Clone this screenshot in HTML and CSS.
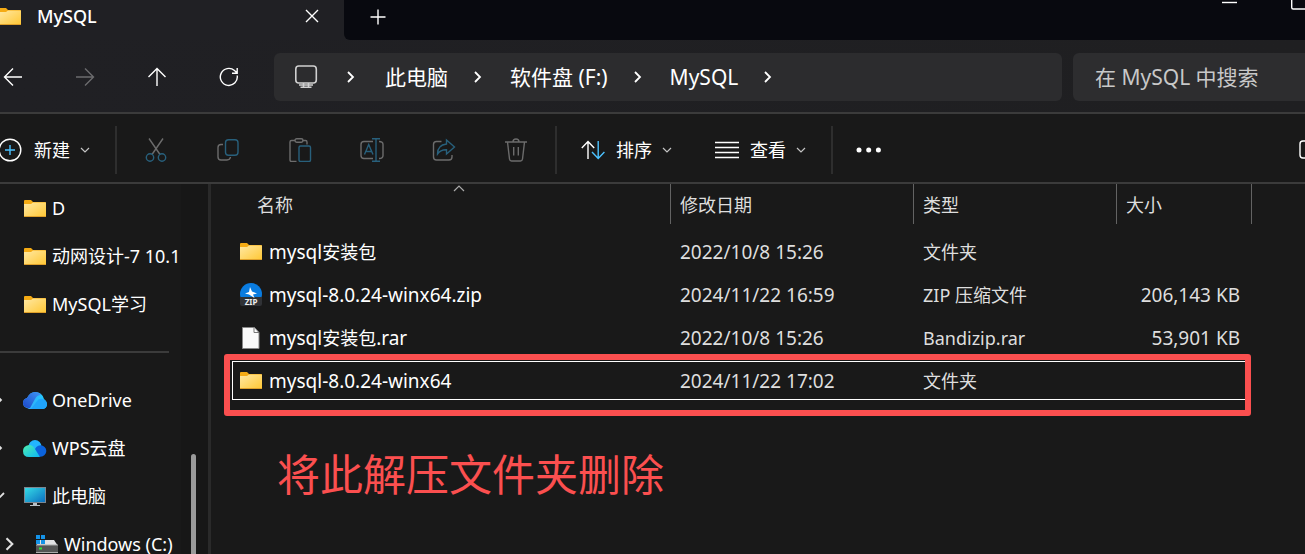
FILE: index.html
```html
<!DOCTYPE html>
<html lang="zh-CN">
<head>
<meta charset="utf-8">
<title>MySQL</title>
<link rel="stylesheet" href="styles.css">
</head>
<body>
<svg class="defs" aria-hidden="true">
  <defs>
    <linearGradient id="gFolder" x1="0" y1="0" x2="1" y2="1"><stop offset="0" stop-color="#ffe8a3"/><stop offset="1" stop-color="#ffc733"/></linearGradient>
    <linearGradient id="gPc" x1="0" y1="0" x2="1" y2="1"><stop offset="0" stop-color="#35dbe6"/><stop offset="1" stop-color="#0b6fc0"/></linearGradient>
    <linearGradient id="gOne" x1="0" y1="0" x2="1" y2="0"><stop offset="0" stop-color="#3aa0f8"/><stop offset="1" stop-color="#1fd0ff"/></linearGradient>
    <linearGradient id="gOneL" x1="0" y1="1" x2="1" y2="0"><stop offset="0" stop-color="#1c47c8"/><stop offset="1" stop-color="#3f96f5"/></linearGradient>
    <linearGradient id="gWps" x1="0" y1="0" x2="1" y2="1"><stop offset="0" stop-color="#4df0b0"/><stop offset="1" stop-color="#0bb4f5"/></linearGradient>
    <symbol id="folder" viewBox="0 0 22 17"><path d="M0 1q0-1 1-1h6l2 2h12q1 0 1 1v5H0z" fill="#f5ab14"/><path d="M0 4h7l2-1.500h13V17H0z" fill="url(#gFolder)"/><path d="M0 16.500h22" stroke="#dfa02a"/></symbol>
    <symbol id="chev" viewBox="0 0 10 6"><path d="M1 1l4 4 4-4" fill="none" stroke="currentColor" stroke-width="1.200"/></symbol>
    <symbol id="next" viewBox="0 0 8 12"><path d="M1 1l5 5-5 5" fill="none" stroke="currentColor" stroke-width="1.800"/></symbol>
  </defs>
</svg>
<div class="app">
  <header class="titlebar">
    <div class="tab">
      <svg class="tab-icon" width="22" height="17"><use href="#folder"/></svg>
      <span class="tab-title">MySQL</span>
      <button class="icon-btn tab-close" aria-label="关闭"><svg width="14" height="14" viewBox="0 0 14 14"><path d="M1 1l12 12M13 1L1 13"/></svg></button>
    </div>
    <div class="tab-rest">
      <button class="icon-btn tab-add" aria-label="新建标签页"><svg width="16" height="16" viewBox="0 0 16 16"><path d="M8 .5v15M.5 8h15"/></svg></button>
      <div class="window-buttons">
        <button class="icon-btn" aria-label="最小化"><svg width="15" height="22" viewBox="0 0 15 22"><path d="M0 2.500h15"/></svg></button>
        <button class="icon-btn" aria-label="最大化"><svg width="14" height="22" viewBox="0 0 14 22"><path d="M.7-4.500v12q0 1.500 1.500 1.500h12"/></svg></button>
      </div>
    </div>
  </header>

  <div class="navbar">
    <div class="nav-buttons">
      <button class="icon-btn" aria-label="后退"><svg width="20" height="20" viewBox="0 0 20 20"><path d="M19 10H1.500M10 1.500L1.500 10l8.500 8.500"/></svg></button>
      <button class="icon-btn dim" aria-label="前进"><svg width="20" height="20" viewBox="0 0 20 20"><path d="M1 10h17.500M10 1.500l8.500 8.500-8.500 8.500"/></svg></button>
      <button class="icon-btn" aria-label="上移"><svg width="20" height="20" viewBox="0 0 20 20"><path d="M10 19V1.500M1.500 10L10 1.500l8.500 8.500"/></svg></button>
      <button class="icon-btn" aria-label="刷新"><svg width="20" height="20" viewBox="0 0 20 20"><path d="M18.200 8.500A8.500 8.500 0 1 1 15.500 3.600L18 6M18.200 1v5.300H13"/></svg></button>
    </div>
    <nav class="address" aria-label="地址">
      <svg class="pc-line" width="24" height="24" viewBox="0 0 24 24"><rect x="1.800" y="1" width="20.500" height="17" rx="3"/><path d="M9.500 18v3.500M14.500 18v3.500M5 20h14M6.500 22.300h11"/></svg>
      <svg class="sep first" width="8" height="12"><use href="#next"/></svg>
      <a href="#pc">此电脑</a>
      <svg class="sep" width="8" height="12"><use href="#next"/></svg>
      <a href="#f">软件盘 (F:)</a>
      <svg class="sep" width="8" height="12"><use href="#next"/></svg>
      <a href="#mysql">MySQL</a>
      <svg class="sep" width="8" height="12"><use href="#next"/></svg>
    </nav>
    <input class="search" type="search" aria-label="搜索" placeholder="在 MySQL 中搜索">
  </div>

  <div class="commands">
    <button class="cmd cmd-new"><svg width="24" height="24" viewBox="0 0 24 24"><circle cx="12" cy="12" r="10.800"/><path class="accent" d="M12 7v10M7 12h10"/></svg><span>新建</span><svg class="chev" width="10" height="6"><use href="#chev"/></svg></button>
    <span class="divider"></span>
    <div class="tools">
      <button class="icon-btn" aria-label="剪切"><svg width="24" height="24" viewBox="0 0 24 24"><path d="M5 .5l11 16M19 .5L8 16.500"/><g class="blue"><circle cx="6" cy="19.500" r="3.700"/><circle cx="18" cy="19.500" r="3.700"/></g></svg></button>
      <button class="icon-btn" aria-label="复制"><svg width="24" height="24" viewBox="0 0 24 24"><path d="M7 6.500H5q-3 0-3 3V19q0 3 3 3h6q3 0 3.500-3"/><rect class="blue" x="9.500" y="1.800" width="12.500" height="15.500" rx="3"/></svg></button>
      <button class="icon-btn" aria-label="粘贴"><svg width="24" height="24" viewBox="0 0 24 24"><path d="M7 2.500H3.500q-1.500 0-1.500 1.500v18q0 1.500 1.500 1.500H8.500M14.500 2.500h3q1.500 0 1.500 1.500v2.500"/><rect x="7" y=".8" width="8" height="3.500" rx="1.700"/><rect class="blue" x="11" y="8" width="11.500" height="15.500" rx="1.500"/></svg></button>
      <button class="icon-btn" aria-label="重命名"><svg width="26" height="24" viewBox="0 0 26 24"><path d="M14 3.500H5q-3 0-3 3v11q0 3 3 3h9M20 3.500q4 0 4 3v11q0 3-4 3"/><path class="blue" d="M5.500 16.500L9.700 6.500l4.300 10M7 13.500h5.500M17 1v22M13 .8h8M13 23.200h8"/></svg></button>
      <button class="icon-btn" aria-label="共享"><svg width="24" height="24" viewBox="0 0 24 24"><path d="M9.500 3.500H4.500q-3 0-3 3v12.500q0 3 3 3h12.500q3 0 3-3V17"/><path class="blue" d="M14.500 2L22.500 9l-8 7v-4.300q-6-.2-9 4.300 0-9 9-10z"/></svg></button>
      <button class="icon-btn" aria-label="删除"><svg width="24" height="24" viewBox="0 0 24 24"><path d="M1 4h22M3.500 4l2 17q.3 2 2 2h9q1.700 0 2-2l2-17M9 4q0-3 3-3t3 3M9.700 9v8.500M14.300 9v8.500"/></svg></button>
    </div>
    <span class="divider"></span>
    <button class="cmd cmd-sort"><svg width="24" height="20" viewBox="0 0 24 20"><path d="M7 19V1.500M.8 8L7 1.500 13.200 8"/><path class="accent" d="M17.200 1v17.500M11 12l6.200 6.500 6.200-6.500"/></svg><span>排序</span><svg class="chev" width="10" height="6"><use href="#chev"/></svg></button>
    <button class="cmd cmd-view"><svg width="24" height="18" viewBox="0 0 24 18"><path d="M0 1.500h24M0 6.500h24M0 11.500h24M0 16.500h24"/></svg><span>查看</span><svg class="chev" width="10" height="6"><use href="#chev"/></svg></button>
    <span class="divider"></span>
    <button class="icon-btn more" aria-label="更多"><svg width="26" height="6" viewBox="0 0 26 6"><g class="dots"><circle cx="3" cy="3" r="2.500"/><circle cx="12.700" cy="3" r="2.500"/><circle cx="22.400" cy="3" r="2.500"/></g></svg></button>
    <button class="icon-btn details" aria-label="详细信息"><svg width="26" height="20" viewBox="0 0 26 20"><rect x="1" y="1" width="24" height="17" rx="3"/></svg></button>
  </div>

  <div class="content">
    <aside class="sidebar">
      <nav class="tree" aria-label="导航窗格">
        <a class="node" href="#d"><svg width="22" height="17"><use href="#folder"/></svg><span>D</span></a>
        <a class="node" href="#dw"><svg width="22" height="17"><use href="#folder"/></svg><span>动网设计-7 10.1</span></a>
        <a class="node" href="#study"><svg width="22" height="17"><use href="#folder"/></svg><span>MySQL学习</span></a>
        <hr>
        <a class="node branch" href="#onedrive"><svg class="twist" width="8" height="12"><use href="#next"/></svg><svg width="24" height="17" viewBox="0 0 24 17"><path d="M4 16q-4-1-4-5 0-4 4-5Q7 0 12 0q7 0 9 7 3 2 3 5 0 4-4 5H6z" fill="url(#gOne)"/><path d="M4 6Q7 0 12 0q4 0 6 3-4 0-6 4l-5 9H5q-5-1-5-5 0-4 4-5z" fill="url(#gOneL)"/><path d="M8 17l6-8q2-3 6-2 4 2 4 5 0 5-5 5z" fill="#20a4fb"/></svg><span>OneDrive</span></a>
        <a class="node branch" href="#wps"><svg class="twist" width="8" height="12"><use href="#next"/></svg><svg width="24" height="17" viewBox="0 0 24 17"><circle cx="12" cy="6.500" r="6.500" fill="#23b5ff"/><circle cx="17.500" cy="11" r="5.800" fill="#0b63dd"/><path d="M6 5q4 0 6 4l5 8H6q-6 0-6-6 0-5 6-6z" fill="url(#gWps)"/></svg><span>WPS云盘</span></a>
        <a class="node branch" href="#pc"><svg class="twist" width="12" height="8" viewBox="0 0 12 8"><path d="M1 1l5 5 5-5" fill="none" stroke="currentColor" stroke-width="1.800"/></svg><svg width="24" height="19" viewBox="-1 0 24 19"><path d="M0 0h22v16H0z" fill="#7c8791"/><path d="M1 1h20v14H1z" fill="url(#gPc)"/><path d="M9 16h4v2h3v1H6v-1h3z" fill="#b8c0c6"/></svg><span>此电脑</span></a>
        <a class="node branch child" href="#c"><svg class="twist" width="9" height="14"><use href="#next"/></svg><svg width="22" height="18" viewBox="0 0 22 18"><path d="M4 5h14l4 6H0z" fill="#e2e2e4"/><path d="M0 10h22v7H0z" fill="#555"/><path d="M0 10h22M0 17.500h22" stroke="#aaa"/><path d="M3 12.500h3v2H3z" fill="#2fe63a"/><path d="M0 0h4v4H0zM5 0h4v4H5zM0 5h4v4H0zM5 5h4v4H5z" fill="#1493e8"/></svg><span>Windows (C:)</span></a>
      </nav>
      <div class="scroll-track"><div class="scroll-thumb"></div></div>
    </aside>

    <main class="files">
      <table>
        <colgroup><col class="c-name"><col class="c-date"><col class="c-type"><col class="c-size"></colgroup>
        <thead>
          <tr>
            <th><button>名称</button><svg class="sort-mark" width="12" height="7" viewBox="0 0 12 7"><path d="M1 6l5-5 5 5"/></svg></th>
            <th><button>修改日期</button></th><th><button>类型</button></th><th><button>大小</button></th>
          </tr>
        </thead>
        <tbody>
          <tr><td><div class="file"><svg width="22" height="17"><use href="#folder"/></svg><span>mysql<span class="han">安装包</span></span></div></td><td>2022/10/8 15:26</td><td>文件夹</td><td></td></tr>
          <tr><td><div class="file"><svg width="22" height="23" viewBox="0 0 22 23"><circle cx="11" cy="11" r="11" fill="#0a7ce0"/><path d="M0 14h22v7q0 2-2 2H2q-2 0-2-2z" fill="#303236"/><path d="M10 4l2 4.500 5 2-4 1 1.500 3.500-5.500-3.500-4-1 4-1.500z" fill="#fff"/><text x="11" y="21.500" class="zip">ZIP</text></svg><span>mysql-8.0.24-winx64.zip</span></div></td><td>2024/11/22 16:59</td><td>ZIP 压缩文件</td><td>206,143 KB</td></tr>
          <tr><td><div class="file"><svg width="22" height="22" viewBox="0 0 22 22"><path d="M2.500.5h12l4.500 5v16H2.500z" fill="#fafafa" stroke="#888"/><path d="M14 .5v5h5" fill="none" stroke="#777"/></svg><span>mysql<span class="han">安装包</span>.rar</span></div></td><td>2022/10/8 15:26</td><td>Bandizip.rar</td><td>53,901 KB</td></tr>
          <tr class="focused"><td><div class="file"><svg width="22" height="17"><use href="#folder"/></svg><span>mysql-8.0.24-winx64</span></div><div class="highlight"></div></td><td>2024/11/22 17:02</td><td>文件夹</td><td></td></tr>
        </tbody>
      </table>
      <p class="note">将此解压文件夹删除</p>
    </main>
  </div>
</div>
</body>
</html>
```
FILE: styles.css
```css
* { box-sizing: border-box; }
body {
  margin: 0;
  background: #191919;
  color: #fff;
  font: 19px/24px "Noto Sans", "Noto Sans CJK SC", sans-serif;
  overflow: hidden;
}
.defs { position: absolute; width: 0; height: 0; }
.app { display: flex; flex-direction: column; height: 100vh; }
button { margin: 0; padding: 0; border: 0; background: none; color: inherit; font: inherit; }
a { color: inherit; text-decoration: none; white-space: nowrap; }
svg { display: block; flex: none; }
.han { font-size: 18px; }
.icon-btn { display: flex; align-items: center; justify-content: center; flex: none; }
.icon-btn svg, .cmd svg { fill: none; stroke: currentColor; stroke-width: 1.4; }

.titlebar { display: flex; flex: none; height: 40px; background: #202024; overflow: hidden; }
.tab { display: flex; flex: none; align-items: center; width: 344px; padding-bottom: 8px; font-size: 18px; font-weight: 500; }
.tab-icon { margin-left: -1px; }
.tab-title { flex: 1; margin-left: 16px; }
.tab-close { width: 64px; }
.tab-rest { display: flex; flex: 1; border-bottom-left-radius: 6px; background: #08090f; }
.tab-add { width: 68px; height: 33px; }
.window-buttons { display: flex; gap: 54px; margin-left: auto; }
.window-buttons .icon-btn { align-items: flex-start; }

.navbar { display: flex; flex: none; align-items: center; height: 74px; padding-top: 2px; background: linear-gradient(to right, #202024, #1f1f21); border-bottom: 2px solid #3b3b3b; }
.nav-buttons { display: flex; gap: 52px; width: 274px; padding-left: 3px; }
.dim { color: #6b6b6e; }
.address { display: flex; flex: 1; align-items: center; height: 48px; padding-left: 20px; border-radius: 6px; background: #2c2c2e; font-size: 21px; }
.pc-line { fill: none; stroke: #d0d0d0; stroke-width: 1.6; }
.address .sep { margin: 0 28px 0 26px; }
.address .first { margin: 0 30px 0 29px; }
.search { flex: none; width: 232px; height: 48px; margin-left: 11px; padding: 0 22px; border: 0; border-radius: 6px 0 0 6px; background: #2d2d2f; color: #fff; font: inherit; font-size: 21px; }
.search::placeholder { color: #c8c8c8; }

.commands { display: flex; flex: none; align-items: center; height: 70px; padding-top: 4px; border-bottom: 2px solid #3b3b3b; }
.divider { flex: none; width: 2px; height: 48px; background: #2e2e2e; }
.cmd { display: flex; flex: none; align-items: center; gap: 10px; font-size: 18px; }
.cmd .chev { color: #c4c4c4; }
.cmd-new { width: 117px; margin-left: -2px; gap: 12px; }
.cmd-new .chev { margin-left: -2px; }
.cmd .accent { stroke: #4cc2ff; }
.tools { display: flex; width: 438px; padding: 0 3px; color: #6c6c6c; }
.tools .icon-btn { width: 72px; }
.tools .blue { stroke: #28607c; }
.cmd-sort { margin-left: 24px; }
.cmd-sort span { margin-left: 1px; }
.cmd-view { margin: 0 25px 0 43px; }
.cmd-view span { margin-left: 1px; }
.more { margin-left: 23px; }
.more .dots { fill: #fff; stroke: none; }
.details { margin-left: auto; margin-right: -20px; }

.content { display: flex; flex: 1; min-height: 0; }
.sidebar { display: flex; flex: none; width: 211px; border-right: 3px solid #2a2a2a; overflow: hidden; }
.tree { width: 181px; overflow: hidden; }
.node { display: flex; align-items: center; height: 48px; gap: 6px; padding-left: 24px; font-size: 18px; line-height: 20px; }
.tree hr { height: 2px; margin: 23px 12px 23px 0; border: 0; background: #3b3b3b; }
.branch { gap: 5px; padding-left: 0; }
.twist { width: 12px; margin-left: -7px; margin-right: 13px; color: #e0e0e0; }
.child { gap: 6px; }
.child .twist { margin-left: 4px; margin-right: 14px; }
.scroll-track { flex: 1; padding: 270px 12px 0 10px; background: #171717; }
.scroll-thumb { width: 5px; height: 100%; border-radius: 3px 3px 0 0; background: #9a9a9a; }

.files { flex: 1; padding-left: 19px; }
table { width: 1022px; border-collapse: collapse; table-layout: fixed; }
.c-name { width: 441px; }
.c-date { width: 243px; }
.c-type { width: 203px; }
.c-size { width: 135px; }
th { position: relative; height: 46px; padding: 0; vertical-align: top; font-weight: 400; }
th button { display: block; width: 100%; height: 40px; padding: 1px 0 0 9px; border-right: 1px solid #636363; color: #dedede; font-size: 18px; text-align: left; }
th:first-child button { padding-left: 27px; }
.sort-mark { position: absolute; top: 1px; left: 223px; fill: none; stroke: #aaa; stroke-width: 1.2; }
td { height: 43px; padding: 0 0 0 9px; color: #dedede; white-space: nowrap; }
td:nth-child(3) { font-size: 18px; }
td:last-child { padding: 0 12px 0 0; text-align: right; }
td:first-child { padding-left: 10px; color: #fff; }
.file { display: flex; align-items: center; gap: 7px; }
.zip { fill: #eee; font: bold 8px "Noto Sans", sans-serif; text-anchor: middle; }
.focused { position: relative; outline: 1px solid #fff; outline-offset: -3px; }
.highlight { position: absolute; inset: -5px 1px -14px -6px; border: 6px solid #fb4f4f; border-radius: 3px; }
.note { margin: 41px 0 0 47px; color: #fb4f4f; font-size: 43px; line-height: 64px; }
```
